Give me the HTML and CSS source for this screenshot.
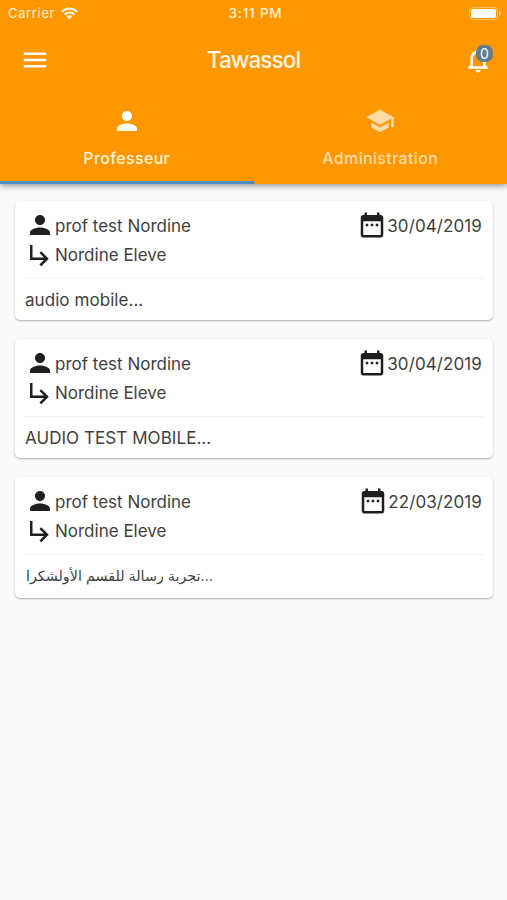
FILE: index.html
```
<!DOCTYPE html>
<html lang="fr">
  <head>
    <meta charset="UTF-8" />
    <meta name="viewport" content="width=device-width, initial-scale=1.0" />
    <title>Tawassol</title>
    <link rel="stylesheet" href="styles.css">
  </head>
  <body>
    <!-- icons -->
    <svg class="sprite" viewBox="0 0 24 24">
      <symbol id="person" viewBox="0 0 24 24">
        <path d="M12 12c2.21 0 4-1.79 4-4s-1.79-4-4-4-4 1.79-4 4 1.79 4 4 4zm0 2c-2.67 0-8 1.34-8 4v2h16v-2c0-2.66-5.33-4-8-4z" />
      </symbol>
      <symbol id="reply" viewBox="0 0 24 24">
        <path d="M19 15l-6 6-1.42-1.42L15.17 16H4V4h2v10h9.17l-3.59-3.58L13 9l6 6z" />
      </symbol>
      <symbol id="date" viewBox="0 0 24 24">
        <path d="M9 11H7v2h2v-2zm4 0h-2v2h2v-2zm4 0h-2v2h2v-2zm2-7h-1V2h-2v2H8V2H6v2H5c-1.11 0-1.99.9-1.99 2L3 20c0 1.1.89 2 2 2h14c1.1 0 2-.9 2-2V6c0-1.1-.9-2-2-2zm0 16H5V9h14v11z" />
      </symbol>
    </svg>

    <header class="header">
      <div class="status">
        <div class="carrier">
          <span>Carrier</span>
          <svg class="wifi" viewBox="0 0 18 13">
            <path d="M1 4.6a11.5 11.5 0 0 1 16 0M3.8 7.6a7.4 7.4 0 0 1 10.4 0" />
            <path class="wifi-dot" d="M9 12.6L5.9 9.5a4.4 4.4 0 0 1 6.2 0z" />
          </svg>
        </div>
        <span class="time">3:11 PM</span>
        <div class="battery"><span class="battery-body"></span><span class="battery-tip"></span></div>
      </div>

      <div class="toolbar">
        <svg class="icon" viewBox="0 0 24 24"><path d="M3 18h18v-2H3v2zm0-5h18v-2H3v2zm0-7v2h18V6H3z" /></svg>
        <h1>Tawassol</h1>
        <div class="bell">
          <svg class="icon" viewBox="0 0 24 24"><path d="M12 22c1.1 0 2-.9 2-2h-4c0 1.1.89 2 2 2zm6-6v-5c0-3.07-1.64-5.64-4.5-6.32V4c0-.83-.67-1.5-1.5-1.5s-1.5.67-1.5 1.5v.68C7.63 5.36 6 7.92 6 11v5l-2 2v1h16v-1l-2-2zm-2 1H8v-6c0-2.48 1.51-4.5 4-4.5s4 2.02 4 4.5v6z" /></svg>
          <span class="badge">0</span>
        </div>
      </div>

      <nav class="tabs">
        <a href="#" class="tab active">
          <svg class="icon"><use href="#person" /></svg>
          <span>Professeur</span>
        </a>
        <a href="#" class="tab">
          <svg class="icon" viewBox="0 0 24 24"><path d="M5 13.18v4L12 21l7-3.82v-4L12 17l-7-3.82zM12 3L1 9l11 6 9-4.91V17h2V9L12 3z" /></svg>
          <span>Administration</span>
        </a>
      </nav>
    </header>

    <!-- messages -->
    <main class="list">
      <article class="card">
        <div class="row">
          <svg class="icon"><use href="#person" /></svg>
          <span class="name">prof test Nordine</span>
          <svg class="icon"><use href="#date" /></svg>
          <span class="date">30/04/2019</span>
        </div>
        <div class="row">
          <svg class="icon"><use href="#reply" /></svg>
          <span class="name">Nordine Eleve</span>
        </div>
        <p class="message">audio mobile...</p>
      </article>

      <article class="card">
        <div class="row">
          <svg class="icon"><use href="#person" /></svg>
          <span class="name">prof test Nordine</span>
          <svg class="icon"><use href="#date" /></svg>
          <span class="date">30/04/2019</span>
        </div>
        <div class="row">
          <svg class="icon"><use href="#reply" /></svg>
          <span class="name">Nordine Eleve</span>
        </div>
        <p class="message">AUDIO TEST MOBILE...</p>
      </article>

      <article class="card">
        <div class="row">
          <svg class="icon"><use href="#person" /></svg>
          <span class="name">prof test Nordine</span>
          <svg class="icon"><use href="#date" /></svg>
          <span class="date">22/03/2019</span>
        </div>
        <div class="row">
          <svg class="icon"><use href="#reply" /></svg>
          <span class="name">Nordine Eleve</span>
        </div>
        <p class="message arabic">تجربة رسالة للقسم الأولشكرا...</p>
      </article>
    </main>
  </body>
</html>
```
FILE: styles.css
```
* {
  margin: 0;
  padding: 0;
  box-sizing: border-box;
}
body {
  min-height: 100vh;
  font-family: "Inter", "DejaVu Sans", sans-serif;
  font-size: 17px;
  color: #3f3f3f;
  background-color: #fafafa;
}
a {
  text-decoration: none;
  color: inherit;
}
.sprite {
  display: none;
}
.icon {
  display: block;
  flex: none;
  width: 30px;
  height: 30px;
  fill: currentColor;
}
.header {
  height: 184px;
  color: #fff;
  background-color: #ff9800;
  box-shadow: 0 2px 6px rgba(0, 0, 0, 0.4);
}
.status {
  display: grid;
  grid-template-columns: 1fr auto 1fr;
  align-items: center;
  height: 26px;
  padding: 0 6px 0 8px;
  font-size: 13px;
  color: #fff0cf;
}
.carrier {
  display: flex;
  align-items: center;
  gap: 6px;
  letter-spacing: 0.65px;
}
.wifi {
  width: 17px;
  height: 13px;
  fill: none;
  stroke: #fff4dc;
  stroke-width: 2.2;
}
.wifi .wifi-dot {
  fill: #fff4dc;
  stroke: none;
}
.time {
  padding-left: 2px;
  font-size: 13.5px;
  font-weight: 500;
  letter-spacing: 0.8px;
}
.battery {
  display: flex;
  justify-content: flex-end;
  align-items: center;
  gap: 1px;
}
.battery-body {
  width: 29px;
  height: 13px;
  border: 1px solid #ffc266;
  border-radius: 4px;
  padding: 1px;
  background-color: #fff;
  background-clip: content-box;
}
.battery-tip {
  width: 2px;
  height: 5px;
  border-radius: 0 2px 2px 0;
  background-color: #ffc266;
}
.toolbar {
  display: flex;
  justify-content: space-between;
  align-items: center;
  height: 67px;
  padding: 0 14px 0 20px;
}
.toolbar h1 {
  margin: 0 6px 1px 0;
  font-size: 22.5px;
  font-weight: 500;
  letter-spacing: -0.9px;
  color: #fff6e2;
}
.bell {
  position: relative;
}
.badge {
  position: absolute;
  top: 0;
  right: 0;
  width: 17px;
  height: 17px;
  border-radius: 7px;
  font-size: 14px;
  line-height: 17px;
  text-align: center;
  background-color: #607d8b;
}
.tabs {
  display: flex;
  height: 91px;
}
.tab {
  display: flex;
  flex: 1;
  flex-direction: column;
  align-items: center;
  gap: 12px;
  padding-top: 13px;
  font-size: 16px;
  font-weight: 500;
  line-height: 20px;
  letter-spacing: 0.35px;
  color: #ffdca6;
}
.tab.active {
  color: #fff;
  border-bottom: 3px solid #4c8fc0;
}
.tab.active span {
  color: #fff3d6;
}
.list {
  display: flex;
  flex-direction: column;
  gap: 19px;
  padding: 17px 14px 20px 15px;
}
.card {
  padding: 9px 10px;
  height: 119px;
  border-radius: 5px;
  background-color: #fff;
  box-shadow: 0 1px 2px rgba(0, 0, 0, 0.3);
}
.row {
  display: flex;
  align-items: center;
  height: 30px;
}
.row:first-child span {
  padding-top: 1px;
}
.row .icon {
  color: #1f1f1f;
}
.name {
  flex: 1;
}
.date {
  margin-right: 1px;
  letter-spacing: 0.1px;
}
.message {
  margin-top: 8px;
  padding-top: 10px;
  line-height: 22px;
  letter-spacing: 0.06px;
  border-top: 1px solid #f0f0f0;
}
.card:last-child {
  height: 121px;
}
.arabic {
  padding-left: 1px;
  font-size: 14.3px;
  letter-spacing: 0;
}
```
